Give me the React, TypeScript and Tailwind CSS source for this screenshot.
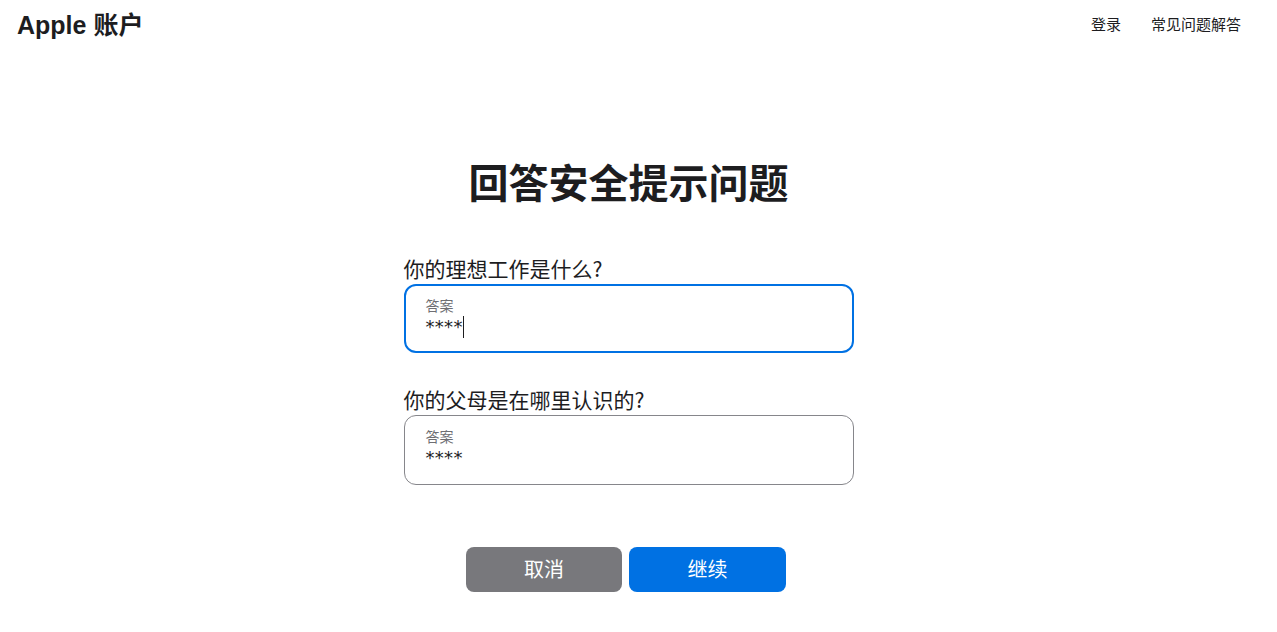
export default function App() {
  return (
    <div
      className="min-h-screen bg-white text-[#1d1d1f]"
      style={{ fontFamily: '"Liberation Sans", "Noto Sans CJK SC", sans-serif' }}
    >
      <header className="flex h-[50px] items-center justify-between pl-[17px] pr-[36px]">
        <h1 className="text-[25px] font-semibold leading-none tracking-[0px]">Apple 账户</h1>
        <nav className="flex items-center gap-[30px] text-[15px]">
          <a href="#">登录</a>
          <a href="#">常见问题解答</a>
        </nav>
      </header>

      <main className="flex justify-center pr-[20px]">
        <div className="flex w-[450px] flex-col pt-[108px]">
          <h2 className="text-center text-[40px] font-bold leading-[52px]">回答安全提示问题</h2>

          <div className="mt-[44px] flex flex-col">
            <label className="font-['Noto_Sans_CJK_SC'] text-[21px] leading-[28px]">你的理想工作是什么?</label>
            <div className="mt-[2px] flex h-[69px] flex-col rounded-[12px] border-2 border-[#0071e3] px-[20px] pt-[10px]">
              <span className="text-[14px] leading-[20px] text-[#6e6e73]">答案</span>
              <div className="flex items-center text-[18px] leading-[22px]">
                <span className="font-['DejaVu_Sans'] tracking-[0.3px]">****</span>
                <span className="h-[22px] w-px bg-[#1d1d1f]" />
              </div>
            </div>
          </div>

          <div className="mt-[32px] flex flex-col">
            <label className="font-['Noto_Sans_CJK_SC'] text-[21px] leading-[28px]">你的父母是在哪里认识的?</label>
            <div className="mt-[2px] flex h-[70px] flex-col rounded-[12px] border border-[#86868b] px-[21px] pt-[11px]">
              <span className="text-[14px] leading-[20px] text-[#6e6e73]">答案</span>
              <span className="font-['DejaVu_Sans'] text-[18px] leading-[22px] tracking-[0.3px]">****</span>
            </div>
          </div>

          <div className="mt-[62px] flex justify-center gap-[7px] pr-[5px]">
            <button className="h-[45px] w-[156px] rounded-[8px] bg-[#78787c] text-[20px] text-white">
              取消
            </button>
            <button className="h-[45px] w-[157px] rounded-[8px] bg-[#0071e3] text-[20px] text-white">
              继续
            </button>
          </div>
        </div>
      </main>
    </div>
  );
}
